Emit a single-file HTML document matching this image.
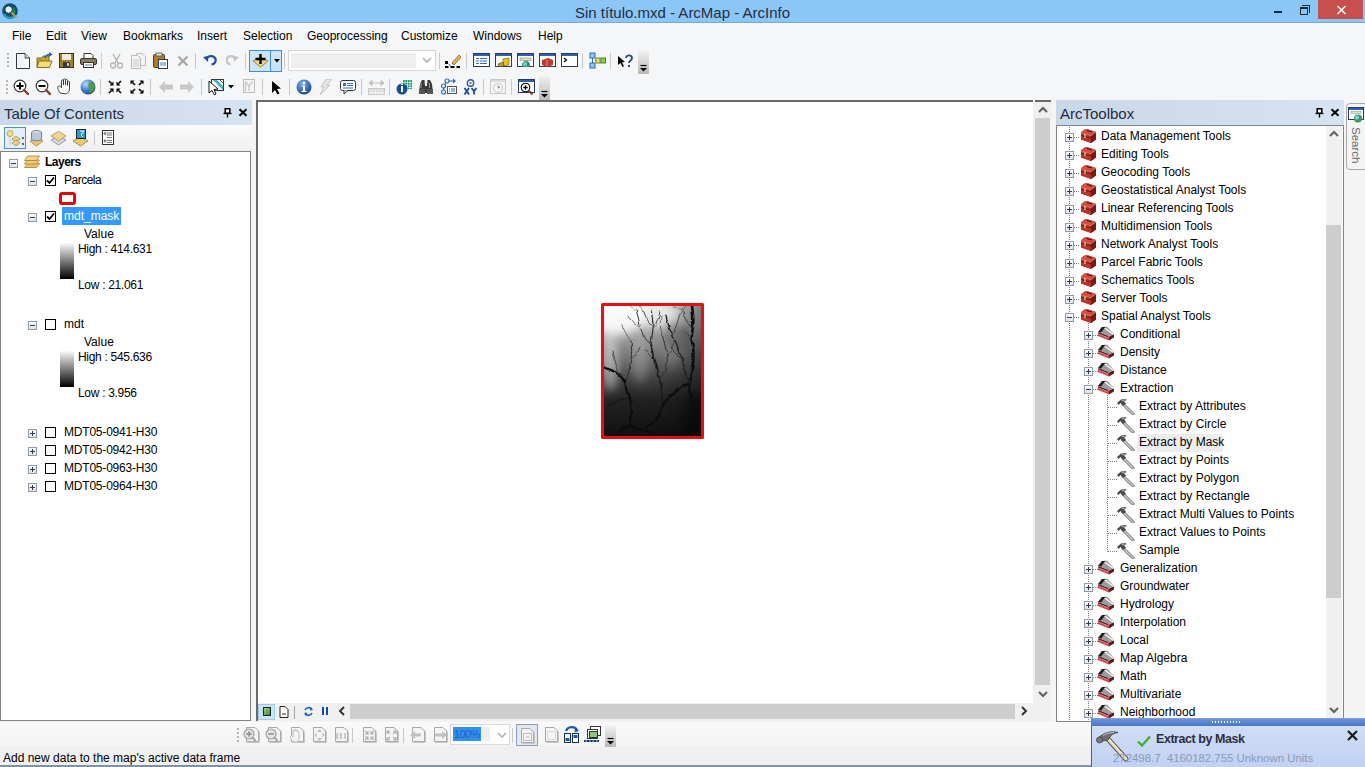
<!DOCTYPE html>
<html><head><meta charset="utf-8">
<style>
*{margin:0;padding:0;box-sizing:border-box}
html,body{width:1365px;height:767px;overflow:hidden;background:#f4f4f4;font-family:"Liberation Sans",sans-serif;font-size:12px;color:#000}
.a{position:absolute}
.t{position:absolute;white-space:nowrap;line-height:12px;height:12px}
.m{position:absolute;white-space:nowrap;line-height:12px;top:30px;color:#000}
.hdr{position:absolute;background:linear-gradient(90deg,#c9d7e8,#d6e3f1);height:25px}
.sep{position:absolute;width:1px;background:#c9c9c9}
.ic{position:absolute}
.tr{position:absolute;white-space:nowrap;line-height:12px;height:12px;color:#000}
.box{position:absolute;width:9px;height:9px;border:1px solid #919aa6;background:linear-gradient(#fdfdfd,#dfe3ea)}
.box:before{content:"";position:absolute;left:1px;top:3px;width:5px;height:1px;background:#2f3b4c}
.plus:after{content:"";position:absolute;left:3px;top:1px;width:1px;height:5px;background:#2f3b4c}
.cb{position:absolute;width:11px;height:11px;border:1px solid #000;background:#fff}
.vd{position:absolute;width:1px;background-image:linear-gradient(#808080 50%,transparent 50%);background-size:1px 2px}
.hd{position:absolute;height:1px;background-image:linear-gradient(90deg,#808080 50%,transparent 50%);background-size:2px 1px}
</style></head><body>
<svg width="0" height="0" style="position:absolute">
<defs>
<linearGradient id="gchest" x1="0" y1="0" x2="0" y2="1"><stop offset="0" stop-color="#d9463a"/><stop offset="1" stop-color="#8c1d14"/></linearGradient>
<symbol id="chest" viewBox="0 0 17 15">
<path d="M1 5 C2 3 4 1.5 6.5 1 L16 4 L16 11.5 L11 15 L1 11.5 Z" fill="#a52a25"/>
<path d="M1 5 C2 3 4 1.5 6.5 1 C9 1.5 13 3 16 4 L11 7.5 Z" fill="#cf4f45"/>
<path d="M1 5 L11 7.5 L11 15 L1 11.5 Z" fill="#b9352e"/>
<path d="M11 7.5 L16 4 L16 11.5 L11 15 Z" fill="#7c1a16"/>
<path d="M1 7.5 L11 10 L16 6.5" stroke="#6a120f" stroke-width=".9" fill="none"/>
<path d="M1.2 5.2 L11 7.7 L16 4.2" stroke="#f09080" stroke-width=".6" fill="none"/>
<path d="M5 6 V10" stroke="#e8c870" stroke-width="1.3"/>
<path d="M7 2.5 L12 4" stroke="#4a0e0a" stroke-width="1.2"/>
</symbol>
<symbol id="toolset" viewBox="0 0 17 15">
<path d="M0 6 L11 10.5 L11 14.5 L0 10 Z" fill="#c24a48"/>
<path d="M1 8 L10 12" stroke="#e89090" stroke-width=".8"/>
<path d="M11 10.5 L16 8 L16 11.5 L11 14.5 Z" fill="#5a2020"/>
<path d="M0 6 L4 1 L9 0.5 L16 8 L11 10.5 Z" fill="#9c9c9c"/>
<path d="M6 1.5 L15.5 8.5" stroke="#f6f6f6" stroke-width="1.4"/>
<path d="M0 6 L4 1 L7.5 1 L3 6.5 Z" fill="#1e1e1e"/>
<path d="M1 7 L10 10.5" stroke="#3a2020" stroke-width="1"/>
</symbol>
<symbol id="hammer" viewBox="0 0 19 17">
<path d="M7 6 L17 16" stroke="#6a6a6a" stroke-width="3" stroke-linecap="round"/>
<path d="M7 6 L17 16" stroke="#d9d9d9" stroke-width="1.2" stroke-linecap="round"/>
<path d="M1 5 L5 1.5 L9 1 L11 2 L8 3 L10 6 L7 8 L4.5 5 L2.5 7 Z" fill="#4a4a4a"/>
<path d="M5 2 L9 1.5 L7 3.5 Z" fill="#b0b0b0"/>
</symbol>
</defs>
</svg>

<!-- ================= TITLE BAR ================= -->
<div class="a" style="left:0;top:0;width:1365px;height:23px;background:#8cc6f6;border-bottom:1px solid #78a9d6"></div>
<svg class="ic" style="left:0px;top:0px" width="22" height="22" viewBox="0 0 22 22">
<circle cx="10" cy="11" r="7.8" fill="#0e4f7a"/>
<path d="M4 14 C6 18 12 19 15 16" stroke="#2a9ab8" stroke-width="2" fill="none"/>
<path d="M12 7 C15 8 16 11 15 14 L12 12 Z" fill="#1a8a4a"/>
<circle cx="8.6" cy="9.6" r="3.8" fill="#e4f2f4" stroke="#0a2a40" stroke-width="1"/>
<path d="M11.5 12.5 L16.5 17.5" stroke="#c89a40" stroke-width="2"/>
</svg>
<div class="t" style="left:575px;top:5px;font-size:15px;line-height:15px;height:15px;color:#1f2e42">Sin título.mxd - ArcMap - ArcInfo</div>
<div class="a" style="left:1274px;top:11px;width:8px;height:2px;background:#0e2a48"></div>
<div class="a" style="left:1300px;top:7px;width:8px;height:8px;border:1px solid #1e2a38;border-top-width:2px"></div>
<div class="a" style="left:1302px;top:5px;width:8px;height:8px;border-top:1px solid #1e2a38;border-right:1px solid #1e2a38"></div>
<div class="a" style="left:1318px;top:0;width:45px;height:19px;background:#c7504f"></div>
<svg class="ic" style="left:1336px;top:5px" width="11" height="10" viewBox="0 0 11 10"><path d="M1.5 1 L9.5 9 M9.5 1 L1.5 9" stroke="#fff" stroke-width="1.5"/></svg>

<!-- ================= MENU BAR ================= -->
<div class="a" style="left:0;top:23px;width:1365px;height:26px;background:#f5f6f7"></div>
<div class="m" style="left:12px">File</div>
<div class="m" style="left:46px">Edit</div>
<div class="m" style="left:81px">View</div>
<div class="m" style="left:123px">Bookmarks</div>
<div class="m" style="left:197px">Insert</div>
<div class="m" style="left:243px">Selection</div>
<div class="m" style="left:307px">Geoprocessing</div>
<div class="m" style="left:401px">Customize</div>
<div class="m" style="left:473px">Windows</div>
<div class="m" style="left:538px">Help</div>

<!-- ================= TOOLBARS ================= -->
<div class="a" style="left:0;top:49px;width:1365px;height:51px;background:#f5f6f7"></div>
<div class="a" style="left:7px;top:53px;width:2px;height:2px;background:#b4b4b4"></div><div class="a" style="left:7px;top:57px;width:2px;height:2px;background:#b4b4b4"></div><div class="a" style="left:7px;top:61px;width:2px;height:2px;background:#b4b4b4"></div><div class="a" style="left:7px;top:65px;width:2px;height:2px;background:#b4b4b4"></div>
<div class="a" style="left:6px;top:80px;width:2px;height:2px;background:#b4b4b4"></div><div class="a" style="left:6px;top:84px;width:2px;height:2px;background:#b4b4b4"></div><div class="a" style="left:6px;top:88px;width:2px;height:2px;background:#b4b4b4"></div><div class="a" style="left:6px;top:92px;width:2px;height:2px;background:#b4b4b4"></div>
<svg class="ic" style="left:16px;top:53px" width="14" height="16" viewBox="0 0 14 16"><path d="M.5 .5 H9 L13.5 5 V15.5 H.5 Z" fill="#fff" stroke="#333"/><path d="M9 .5 V5 H13.5" fill="#ddd" stroke="#333"/><rect x="1.5" y="1.5" width="7" height="13" fill="#eef3fb"/></svg>
<svg class="ic" style="left:36px;top:52px" width="17" height="17" viewBox="0 0 17 17"><path d="M1 6 H6 L7 4 H13 V15 H1 Z" fill="#c8a430" stroke="#6b5510" stroke-width=".8"/><path d="M3 9 H16 L13.5 15.5 H1 Z" fill="#f5dc70" stroke="#6b5510" stroke-width=".8"/><path d="M9 6 C10 3 12 2.5 14 2.5" stroke="#1f5fbf" stroke-width="1.6" fill="none"/><path d="M13 0 L16.5 2.5 L13 5 Z" fill="#1f5fbf"/></svg>
<svg class="ic" style="left:59px;top:53px" width="15" height="15" viewBox="0 0 15 15"><rect x=".5" y=".5" width="14" height="14" fill="#9a8430" stroke="#3e3410"/><rect x="3" y="1" width="9" height="6" fill="#f0eadc"/><rect x="4" y="9" width="7" height="5.5" fill="#3a3a3a"/><rect x="8" y="10" width="2" height="3" fill="#ccc"/></svg>
<svg class="ic" style="left:80px;top:53px" width="17" height="15" viewBox="0 0 17 15"><path d="M4 .5 H11 L13 2.5 V6 H4 Z" fill="#fff" stroke="#333"/><rect x=".5" y="5.5" width="16" height="6" rx="1.5" fill="#8a7c58" stroke="#333"/><rect x="3.5" y="9.5" width="10" height="5" fill="#fff" stroke="#333"/><path d="M5 12 H12" stroke="#4a7bc8"/></svg>
<div class="sep" style="left:101px;top:53px;height:16px"></div>
<svg class="ic" style="left:109px;top:53px" width="15" height="16" viewBox="0 0 15 16"><path d="M4 1 L9 10 M11 1 L6 10" stroke="#b4b4b4" stroke-width="1.5"/><circle cx="4" cy="12.5" r="2.5" fill="none" stroke="#b4b4b4" stroke-width="1.3"/><circle cx="11" cy="12.5" r="2.5" fill="none" stroke="#b4b4b4" stroke-width="1.3"/></svg>
<svg class="ic" style="left:131px;top:53px" width="15" height="16" viewBox="0 0 15 16"><path d="M.5 2.5 H7 L9.5 5 V15.5 H.5 Z" fill="#f4f4f4" stroke="#bbb"/><path d="M5.5 .5 H11 L14.5 4 V12.5 H9.5 V5 L7 2.5 H5.5 Z" fill="#f4f4f4" stroke="#bbb"/><path d="M2 7 H8 M2 9 H8 M2 11 H8 M2 13 H8" stroke="#ccc"/></svg>
<svg class="ic" style="left:153px;top:52px" width="15" height="17" viewBox="0 0 15 17"><rect x=".5" y="2.5" width="11" height="13" rx="1" fill="#b27a30" stroke="#5a3a10"/><rect x="3" y="1" width="6" height="3" fill="#ddd" stroke="#555" stroke-width=".8"/><rect x="5.5" y="7.5" width="9" height="9" fill="#fff" stroke="#2a3a5a"/><path d="M7 11 H13 M7 13 H13" stroke="#4a7bc8"/></svg>
<svg class="ic" style="left:177px;top:55px" width="12" height="12" viewBox="0 0 12 12"><path d="M1.5 1.5 L10.5 10.5 M10.5 1.5 L1.5 10.5" stroke="#a8a8a8" stroke-width="2.2"/></svg>
<div class="sep" style="left:195px;top:53px;height:16px"></div>
<svg class="ic" style="left:203px;top:54px" width="14" height="12" viewBox="0 0 14 12"><path d="M3 5 C5 1.5 11 1 12.5 5 C13.5 8 11 10 8.5 10.5" stroke="#1f4fa0" stroke-width="2.2" fill="none"/><path d="M0 3 L5 8 L5.5 2 Z" fill="#1f4fa0"/></svg>
<svg class="ic" style="left:226px;top:54px" width="13" height="12" viewBox="0 0 13 12"><path d="M10 5 C8 1.5 2 1 .8 5 C0 8 2 10 4.5 10.5" stroke="#c2c2c2" stroke-width="2.2" fill="none"/><path d="M13 3 L8 8 L7.5 2 Z" fill="#c2c2c2"/></svg>
<div class="sep" style="left:245px;top:53px;height:16px"></div>
<div class="a" style="left:249px;top:50px;width:33px;height:22px;background:#cce4f7;border:1px solid #3d8fd6"></div>
<div class="a" style="left:270px;top:51px;width:1px;height:20px;background:#3d8fd6"></div>
<svg class="ic" style="left:252px;top:53px" width="17" height="15" viewBox="0 0 17 15"><path d="M1 8 L8.5 4 L16 8 L8.5 14 Z" fill="#f3d684" stroke="#8a6a20" stroke-width=".8"/><path d="M8.5 1 V11 M3.5 6 H13.5" stroke="#000" stroke-width="2.4"/></svg>
<svg class="ic" style="left:274px;top:59px" width="6" height="4" viewBox="0 0 6 4"><path d="M0 0 H6 L3 3.5 Z" fill="#000"/></svg>
<div class="sep" style="left:284px;top:53px;height:16px"></div>
<div class="a" style="left:288px;top:50px;width:148px;height:21px;background:#fff;border:1px solid #d5d5d5"></div>
<div class="a" style="left:291px;top:53px;width:125px;height:15px;background:#efefef"></div>
<svg class="ic" style="left:422px;top:57px" width="10" height="7" viewBox="0 0 10 7"><path d="M1 1 L5 5 L9 1" stroke="#b0b0b0" stroke-width="1.6" fill="none"/></svg>
<div class="sep" style="left:439px;top:53px;height:16px"></div>
<svg class="ic" style="left:444px;top:53px" width="17" height="15" viewBox="0 0 17 15"><path d="M2 9 L8 14 M2 14 H15" stroke="#000" stroke-width="1" stroke-dasharray="1 1"/><rect x="1" y="8" width="3" height="3" fill="#000"/><rect x="1" y="13" width="3" height="3" fill="#000"/><rect x="7" y="13" width="3" height="3" fill="#000"/><rect x="13" y="13" width="3" height="3" fill="#000"/><path d="M8 10 L15 2 L17 4 L10 12 Z" fill="#e8b84a" stroke="#6a4a10" stroke-width=".7"/></svg>
<div class="sep" style="left:466px;top:53px;height:16px"></div>
<svg class="ic" style="left:473px;top:53px" width="17" height="14" viewBox="0 0 17 14"><rect x=".5" y=".5" width="16" height="13" fill="#fff" stroke="#2a3a5a"/><rect x="1" y="1" width="15" height="2" fill="#2f5fb0"/><path d="M3 5.5 H6 M7 5.5 H14 M3 8 H6 M7 8 H14 M3 10.5 H6 M7 10.5 H14" stroke="#2f6fd0" stroke-width="1.2"/></svg>
<svg class="ic" style="left:495px;top:53px" width="17" height="14" viewBox="0 0 17 14"><rect x=".5" y=".5" width="16" height="13" fill="#fff" stroke="#2a3a5a"/><rect x="1" y="1" width="15" height="2" fill="#2f5fb0"/><path d="M8 6 L14 5 V12 L8 13 Z" fill="#e8c020" stroke="#6a5a10" stroke-width=".6"/><path d="M3 11 L8 9 L9 13 L4 14 Z" fill="#c0a020" stroke="#444" stroke-width=".6"/></svg>
<svg class="ic" style="left:517px;top:53px" width="17" height="14" viewBox="0 0 17 14"><rect x=".5" y=".5" width="16" height="13" fill="#fff" stroke="#2a3a5a"/><rect x="1" y="1" width="15" height="2" fill="#2f5fb0"/><rect x="3" y="5" width="11" height="2.5" fill="#ddd" stroke="#888" stroke-width=".6"/><circle cx="9" cy="12" r="4" fill="#3a9a5a"/><circle cx="8" cy="11" r="2" fill="#6acaf0"/></svg>
<svg class="ic" style="left:539px;top:53px" width="17" height="14" viewBox="0 0 17 14"><rect x=".5" y=".5" width="16" height="13" fill="#fff" stroke="#2a3a5a"/><rect x="1" y="1" width="15" height="2" fill="#2f5fb0"/><path d="M3 7 L9 5 L14 7 V12 L8 14 L3 12 Z" fill="#c0392b"/><path d="M8 7 V13" stroke="#e88"/></svg>
<svg class="ic" style="left:561px;top:53px" width="17" height="14" viewBox="0 0 17 14"><rect x=".5" y=".5" width="16" height="13" fill="#fff" stroke="#2a3a5a"/><rect x="1" y="1" width="15" height="2" fill="#2f5fb0"/><path d="M3 5 L5.5 7 L3 9" stroke="#000" stroke-width="1.2" fill="none"/></svg>
<div class="sep" style="left:582px;top:53px;height:16px"></div>
<svg class="ic" style="left:589px;top:52px" width="17" height="17" viewBox="0 0 17 17"><rect x="1" y="1" width="5" height="5" fill="#8ec8f0" stroke="#2a6ab0"/><rect x="1" y="11" width="5" height="5" fill="#8ec8f0" stroke="#2a6ab0"/><rect x="7" y="6" width="4" height="5" fill="#f0e070" stroke="#8a7a20"/><rect x="12" y="6" width="4.5" height="5" fill="#8ad060" stroke="#3a8a20"/><path d="M3.5 6 V11 M6 8.5 H7" stroke="#2a6ab0"/></svg>
<div class="sep" style="left:610px;top:53px;height:16px"></div>
<svg class="ic" style="left:617px;top:53px" width="16" height="15" viewBox="0 0 16 15"><path d="M1 3 L1 12 L3.5 10 L5.5 14 L7 13.3 L5 9.3 L8 9 Z" fill="#000"/><path d="M9 5 C9 1.5 15 1.5 15 5 C15 7.5 12 7.5 12 10" stroke="#2a4a8a" stroke-width="1.8" fill="none"/><rect x="11" y="12" width="2" height="2" fill="#2a4a8a"/></svg>
<div class="a" style="left:638px;top:51px;width:11px;height:23px;background:linear-gradient(#f0f0f0,#b9b9b9);"></div><svg class="ic" style="left:640px;top:64px" width="7" height="8" viewBox="0 0 7 8"><path d="M0.5 1.5 H6.5" stroke="#000" stroke-width="1.2"/><path d="M0 4 H7 L3.5 7.5 Z" fill="#000"/></svg>
<svg class="ic" style="left:13px;top:79px" width="16" height="16" viewBox="0 0 16 16"><circle cx="7" cy="7" r="5.8" fill="#fff" stroke="#333" stroke-width="1.2"/><path d="M3.5 7 H10.5" stroke="#000" stroke-width="2"/><path d="M7 3.5 V10.5" stroke="#000" stroke-width="2"/><path d="M11 11 L15 15" stroke="#8a3a2a" stroke-width="2.4" stroke-linecap="round"/></svg>
<svg class="ic" style="left:35px;top:79px" width="16" height="16" viewBox="0 0 16 16"><circle cx="7" cy="7" r="5.8" fill="#fff" stroke="#333" stroke-width="1.2"/><path d="M3.5 7 H10.5" stroke="#000" stroke-width="2"/><path d="M11 11 L15 15" stroke="#8a3a2a" stroke-width="2.4" stroke-linecap="round"/></svg>
<svg class="ic" style="left:57px;top:78px" width="16" height="17" viewBox="0 0 16 17"><path d="M3 15 C1 12 0 9 1.5 8 C3 7.5 4 9 4.5 10 V3 C4.5 1.5 6.5 1.5 6.5 3 V7 V1.8 C6.5 .5 8.5 .5 8.5 1.8 V7 V2.5 C8.5 1 10.5 1 10.5 2.5 V7.5 V4 C10.5 3 12.5 3 12.5 4 V11 C12.5 13 11 15 9 16 Z" fill="#fff" stroke="#333" stroke-width=".9"/></svg>
<svg class="ic" style="left:80px;top:79px" width="16" height="16" viewBox="0 0 16 16"><defs><radialGradient id="glb" cx=".35" cy=".3" r=".8"><stop offset="0" stop-color="#b8e0ff"/><stop offset=".55" stop-color="#3a7ad0"/><stop offset="1" stop-color="#1a3a80"/></radialGradient></defs><circle cx="8" cy="8" r="7.5" fill="url(#glb)"/><path d="M9 4 C12 3 14.5 5 15 8 C14 11 12 13.5 9.5 14.5 C10.5 12 8.5 11 9.5 9 C8 8 8 6 9 4Z" fill="#4aa03a"/><path d="M3 10 C4 12 5 13 6.5 14 C5 14 3.5 12.5 3 10Z" fill="#4aa03a"/></svg>
<div class="sep" style="left:100px;top:79px;height:16px"></div>
<svg class="ic" style="left:108px;top:80px" width="14" height="14" viewBox="0 0 14 14"><path d="M1 1 L3.5 3.5" stroke="#000" stroke-width="1.6"/><path d="M5.5 5.5 H1.5 L5.5 1.5 Z" fill="#000"/><path d="M13 1 L10.5 3.5" stroke="#000" stroke-width="1.6"/><path d="M8.5 5.5 H12.5 L8.5 1.5 Z" fill="#000"/><path d="M1 13 L3.5 10.5" stroke="#000" stroke-width="1.6"/><path d="M5.5 8.5 H1.5 L5.5 12.5 Z" fill="#000"/><path d="M13 13 L10.5 10.5" stroke="#000" stroke-width="1.6"/><path d="M8.5 8.5 H12.5 L8.5 12.5 Z" fill="#000"/></svg>
<svg class="ic" style="left:130px;top:80px" width="14" height="14" viewBox="0 0 14 14"><path d="M5 5 L2.5 2.5" stroke="#000" stroke-width="1.6"/><path d="M.5 .5 H4.5 L.5 4.5 Z" fill="#000"/><path d="M9 5 L11.5 2.5" stroke="#000" stroke-width="1.6"/><path d="M13.5 .5 H9.5 L13.5 4.5 Z" fill="#000"/><path d="M5 9 L2.5 11.5" stroke="#000" stroke-width="1.6"/><path d="M.5 13.5 H4.5 L.5 9.5 Z" fill="#000"/><path d="M9 9 L11.5 11.5" stroke="#000" stroke-width="1.6"/><path d="M13.5 13.5 H9.5 L13.5 9.5 Z" fill="#000"/></svg>
<div class="sep" style="left:150px;top:79px;height:16px"></div>
<svg class="ic" style="left:159px;top:81px" width="14" height="12" viewBox="0 0 14 12"><path d="M0 6 L6 0 V3.5 H14 V8.5 H6 V12 Z" fill="#c8c8c8"/></svg>
<svg class="ic" style="left:180px;top:81px" width="14" height="12" viewBox="0 0 14 12"><path d="M14 6 L8 0 V3.5 H0 V8.5 H8 V12 Z" fill="#c8c8c8"/></svg>
<div class="sep" style="left:201px;top:79px;height:16px"></div>
<svg class="ic" style="left:208px;top:79px" width="16" height="16" viewBox="0 0 16 16"><rect x="3.5" y=".5" width="12" height="11" fill="#fff" stroke="#333"/><path d="M5 1 H9 L15 7 V11 Z" fill="#38b8c8"/><path d="M12 1 L15 4" stroke="#333" stroke-width=".8"/><path d="M1 2 V14 L4 11.5 L6.5 16 L8 15 L6 10.5 L10 10 Z" fill="#fff" stroke="#000" stroke-width=".9"/></svg>
<svg class="ic" style="left:228px;top:85px" width="6" height="4" viewBox="0 0 6 4"><path d="M0 0 H6 L3 3.5 Z" fill="#000"/></svg>
<svg class="ic" style="left:243px;top:79px" width="12" height="14" viewBox="0 0 12 14"><rect x=".5" y=".5" width="11" height="13" fill="#f4f4f4" stroke="#bbb"/><path d="M2.5 2.5 L6 7 L9.5 2.5 M6 7 V12 M2.5 2.5 V12" stroke="#c4c4c4" fill="none" stroke-width="1.2"/></svg>
<div class="sep" style="left:262px;top:79px;height:16px"></div>
<svg class="ic" style="left:271px;top:80px" width="11" height="15" viewBox="0 0 11 15"><path d="M1 1 V13 L4 10 L6.5 14.5 L8.5 13.5 L6 9 L10 8.5 Z" fill="#000"/></svg>
<div class="sep" style="left:289px;top:79px;height:16px"></div>
<svg class="ic" style="left:296px;top:79px" width="16" height="16" viewBox="0 0 16 16"><defs><radialGradient id="ibl" cx=".4" cy=".3" r=".8"><stop offset="0" stop-color="#7ab0f0"/><stop offset="1" stop-color="#0c3a90"/></radialGradient></defs><circle cx="8" cy="8" r="7.5" fill="url(#ibl)"/><circle cx="8" cy="4" r="1.4" fill="#fff"/><path d="M6 6.5 H9 V12 H10.5 V13 H5.5 V12 H7 V7.5 H6 Z" fill="#fff"/></svg>
<svg class="ic" style="left:318px;top:79px" width="15" height="16" viewBox="0 0 15 16"><path d="M8 0 L14 0 L9 6 L12 6 L2 16 L6 8 L3 8 Z" fill="#e4e4e4" stroke="#bbb" stroke-width=".8"/></svg>
<svg class="ic" style="left:340px;top:79px" width="16" height="16" viewBox="0 0 16 16"><rect x=".5" y="1.5" width="15" height="10" rx="2" fill="#fff" stroke="#333"/><path d="M4 11.5 L4 15 L8 11.5" fill="#fff" stroke="#333"/><rect x="3" y="4" width="3" height="3" fill="#2f6fd0"/><path d="M7 4.5 H13 M7 6.5 H13 M3 9 H13" stroke="#2f6fd0"/></svg>
<div class="sep" style="left:361px;top:79px;height:16px"></div>
<svg class="ic" style="left:368px;top:79px" width="17" height="16" viewBox="0 0 17 16"><path d="M3 4 H14 M1 4 L4 1.5 V6.5 Z M16 4 L13 1.5 V6.5 Z" stroke="#c0c0c0" fill="#c0c0c0"/><rect x=".5" y="9.5" width="16" height="6" fill="#eee" stroke="#c8c8c8"/><path d="M3 10 V13 M6 10 V13 M9 10 V13 M12 10 V13 M15 10 V13" stroke="#c8c8c8"/></svg>
<div class="sep" style="left:389px;top:79px;height:16px"></div>
<svg class="ic" style="left:396px;top:79px" width="17" height="16" viewBox="0 0 17 16"><path d="M7 1 H16 V10 H7 Z" fill="#1a9a6a"/><path d="M9 1 V10 M11.5 1 V10 M14 1 V10 M7 3.5 H16 M7 6 H16 M7 8.5 H16" stroke="#fff" stroke-width=".6"/><circle cx="6" cy="10" r="5.5" fill="#1a4a9a"/><path d="M5 7 H7 V13 H5 Z M5 5 H7 V6 H5Z" fill="#fff"/></svg>
<svg class="ic" style="left:418px;top:79px" width="16" height="16" viewBox="0 0 16 16"><path d="M1 14 L2 5 L4 1 H6.5 L7 7 H9 L9.5 1 H12 L14 5 L15 14 Z" fill="#3a3a3a"/><rect x="1" y="10" width="6" height="5" fill="#555"/><rect x="9" y="10" width="6" height="5" fill="#555"/><path d="M3 4 V9 M11.5 4 V9" stroke="#999"/></svg>
<svg class="ic" style="left:441px;top:78px" width="16" height="17" viewBox="0 0 16 17"><circle cx="2.5" cy="8" r="2" fill="none" stroke="#2a6ab0" stroke-width="1.2"/><circle cx="2.5" cy="14" r="2" fill="none" stroke="#2a6ab0" stroke-width="1.2"/><circle cx="6" cy="3" r="2" fill="none" stroke="#2a6ab0" stroke-width="1.2"/><path d="M2.5 10 V12 M4 6.5 L5 5 M8 3 H12" stroke="#2a6ab0" stroke-width="1.2"/><path d="M12 .5 L15 3 L12 5.5Z" fill="#2a6ab0"/><rect x="6.5" y="8.5" width="9" height="7" fill="#fff" stroke="#555"/><path d="M8 11 H9 M10 11 H14 M8 13 H9 M10 13 H14" stroke="#2a6ab0"/></svg>
<svg class="ic" style="left:464px;top:79px" width="13" height="16" viewBox="0 0 13 16"><circle cx="6.5" cy="4" r="3.2" fill="none" stroke="#2a5aa8" stroke-width="1.4"/><circle cx="6.5" cy="4" r="1" fill="#2a5aa8"/><path d="M.5 9 L5 15.5 M5 9 L.5 15.5 M7.5 9 L10 12 L12.5 9 M10 12 V15.5" stroke="#1a4a9a" stroke-width="1.8" fill="none"/></svg>
<div class="sep" style="left:483px;top:79px;height:16px"></div>
<svg class="ic" style="left:490px;top:79px" width="16" height="16" viewBox="0 0 16 16"><rect x=".5" y=".5" width="15" height="14" fill="#f4f4f4" stroke="#c8c8c8"/><rect x="1" y="1" width="14" height="2" fill="#ddd"/><circle cx="8" cy="9" r="4.5" fill="none" stroke="#c8c8c8"/><path d="M8 6.5 V9 H10" stroke="#c8c8c8"/></svg>
<div class="sep" style="left:511px;top:79px;height:16px"></div>
<svg class="ic" style="left:518px;top:79px" width="17" height="17" viewBox="0 0 17 17"><rect x=".5" y=".5" width="16" height="13" fill="#fff" stroke="#2a3a5a"/><rect x="1" y="1" width="15" height="2" fill="#2f5fb0"/><circle cx="7.5" cy="8.5" r="4.3" fill="#fff" stroke="#000" stroke-width="1.1"/><path d="M5.3 8.5 H9.7 M7.5 6.3 V10.7" stroke="#000" stroke-width="1.3"/><path d="M10.5 11.5 L14.5 15.5" stroke="#8a3a2a" stroke-width="2.2"/></svg>
<div class="a" style="left:539px;top:76px;width:11px;height:24px;background:linear-gradient(#f0f0f0,#b9b9b9);"></div><svg class="ic" style="left:541px;top:90px" width="7" height="8" viewBox="0 0 7 8"><path d="M0.5 1.5 H6.5" stroke="#000" stroke-width="1.2"/><path d="M0 4 H7 L3.5 7.5 Z" fill="#000"/></svg>

<!-- ================= TOC ================= -->
<div class="hdr" style="left:0;top:100px;width:252px"></div>
<div class="t" style="left:4px;top:106px;font-size:15px;line-height:15px;height:15px;color:#1f2e42">Table Of Contents</div>
<svg class="ic" style="left:223px;top:107px" width="9" height="11" viewBox="0 0 9 11"><path d="M2.2 1.8 H6.8 V6.2 H2.2 Z" stroke="#000" stroke-width="1.5" fill="#fff"/><path d="M0.5 6.5 H8.5" stroke="#000" stroke-width="1.3"/><path d="M4.5 7 V10.5" stroke="#000" stroke-width="1.3"/></svg>
<svg class="ic" style="left:238px;top:108px" width="10" height="9" viewBox="0 0 10 9"><path d="M1.5 1.2 L8.5 7.8 M8.5 1.2 L1.5 7.8" stroke="#000" stroke-width="2"/></svg>
<div class="a" style="left:0;top:125px;width:252px;height:26px;background:linear-gradient(#fbfbfb,#efefef)"></div>
<div class="a" style="left:4px;top:127px;width:22px;height:22px;border:1px solid #4a90d8;background:#e2eefa"></div>
<svg class="ic" style="left:6px;top:130px" width="19" height="17" viewBox="0 0 19 17"><circle cx="4" cy="3.5" r="3" fill="#f0e080" stroke="#b0a040" stroke-width=".8"/><path d="M6 9 L10 6 L14 9 L10 12 Z" fill="#f0d090" stroke="#b08a40" stroke-width=".8"/><path d="M6 13 L10 10 L14 13 L10 16 Z" fill="#f0d090" stroke="#b08a40" stroke-width=".8"/><path d="M4 6 V14 H6" stroke="#999" stroke-width=".8" fill="none" stroke-dasharray="1 1"/><path d="M16 8 H18 M16 14 H18" stroke="#2a3a5a" stroke-width="1.4"/></svg>
<svg class="ic" style="left:29px;top:130px" width="15" height="17" viewBox="0 0 15 17"><path d="M1 11 L7.5 7 L14 11 L7.5 16 Z" fill="#f0c870" stroke="#a07a30" stroke-width=".8"/><ellipse cx="7.5" cy="2.5" rx="5" ry="2" fill="#dde6f0" stroke="#667" stroke-width=".8"/><path d="M2.5 2.5 V9 C2.5 11.5 12.5 11.5 12.5 9 V2.5" fill="#b8c8dc" stroke="#667" stroke-width=".8"/></svg>
<svg class="ic" style="left:50px;top:130px" width="17" height="17" viewBox="0 0 17 17"><path d="M1 10 L8.5 6 L16 10 L8.5 15 Z" fill="#d8d8e8" stroke="#8888a0" stroke-width=".8"/><path d="M1 6 L8.5 1.5 L16 6 L8.5 11 Z" fill="#f0d490" stroke="#b08a40" stroke-width=".8"/></svg>
<svg class="ic" style="left:72px;top:129px" width="17" height="18" viewBox="0 0 17 18"><path d="M1 12 L8.5 8 L16 12 L8.5 17 Z" fill="#f0c870" stroke="#a07a30" stroke-width=".8"/><rect x="4.5" y=".5" width="9" height="9" fill="#2a9ad0" stroke="#223"/><path d="M8 2 L12 2 L9 6 L11 8" stroke="#fff" fill="none"/></svg>
<div class="sep" style="left:94px;top:131px;height:14px"></div>
<svg class="ic" style="left:102px;top:130px" width="12" height="15" viewBox="0 0 12 15"><rect x=".5" y=".5" width="11" height="14" fill="#fff" stroke="#333"/><circle cx="3" cy="3.5" r="1" fill="none" stroke="#333" stroke-width=".8"/><circle cx="3" cy="11" r="1" fill="none" stroke="#333" stroke-width=".8"/><path d="M5 3 H10 M5 5 H10 M5 7.5 H10 M5 10.5 H10 M5 12.5 H10" stroke="#555" stroke-width=".8"/></svg>
<div class="a" style="left:0;top:151px;width:251px;height:570px;background:#fff;border:1px solid #838383"></div>
<div class="box" style="left:9px;top:159px"></div>
<svg class="ic" style="left:24px;top:155px" width="16" height="13" viewBox="0 0 16 13">
<path d="M0.5 12.5 L12.5 12.5 L15.5 8.5 L3.5 8.5 Z" fill="#e9c470" stroke="#a88030" stroke-width=".8"/>
<path d="M0.5 9 L12.5 9 L15.5 5 L3.5 5 Z" fill="#efcc78" stroke="#a88030" stroke-width=".8"/>
<path d="M0.5 5.5 L12.5 5.5 L15.5 1 L3.5 1 Z" fill="#f4d68a" stroke="#a88030" stroke-width=".8"/>
</svg>
<div class="tr" style="left:45px;top:156px;letter-spacing:-0.5px"><b>Layers</b></div>
<div class="box" style="left:28px;top:177px"></div>
<div class="cb" style="left:45px;top:175px"></div>
<svg class="ic" style="left:46px;top:176px" width="9" height="9" viewBox="0 0 9 9"><path d="M1 4.5 L3.5 7 L8 1.5" stroke="#000" stroke-width="1.8" fill="none"/></svg>
<div class="tr" style="left:64px;top:174px;letter-spacing:-0.5px">Parcela</div>
<div class="a" style="left:59px;top:192px;width:17px;height:13px;border:3px solid #e00a0a;border-radius:3px"></div>
<div class="box" style="left:28px;top:213px"></div>
<div class="cb" style="left:45px;top:211px"></div>
<svg class="ic" style="left:46px;top:212px" width="9" height="9" viewBox="0 0 9 9"><path d="M1 4.5 L3.5 7 L8 1.5" stroke="#000" stroke-width="1.8" fill="none"/></svg>
<div class="a" style="left:62px;top:207px;width:59px;height:18px;background:#3399ff"></div>
<div class="tr" style="left:64px;top:210px;color:#fff">mdt_mask</div>
<div class="tr" style="left:84px;top:228px;">Value</div>
<div class="a" style="left:60px;top:243px;width:14px;height:36px;background:linear-gradient(#fafafa,#000)"></div>
<div class="tr" style="left:78px;top:243px;letter-spacing:-0.3px">High : 414.631</div>
<div class="tr" style="left:78px;top:279px;letter-spacing:-0.3px">Low : 21.061</div>
<div class="box" style="left:28px;top:321px"></div>
<div class="cb" style="left:45px;top:319px"></div>
<div class="tr" style="left:64px;top:318px;letter-spacing:0">mdt</div>
<div class="tr" style="left:84px;top:336px;">Value</div>
<div class="a" style="left:60px;top:351px;width:14px;height:36px;background:linear-gradient(#fafafa,#000)"></div>
<div class="tr" style="left:78px;top:351px;letter-spacing:-0.3px">High : 545.636</div>
<div class="tr" style="left:78px;top:387px;letter-spacing:-0.3px">Low : 3.956</div>
<div class="box plus" style="left:28px;top:429px"></div>
<div class="cb" style="left:45px;top:427px"></div>
<div class="tr" style="left:64px;top:426px;letter-spacing:-0.2px">MDT05-0941-H30</div>
<div class="box plus" style="left:28px;top:447px"></div>
<div class="cb" style="left:45px;top:445px"></div>
<div class="tr" style="left:64px;top:444px;letter-spacing:-0.2px">MDT05-0942-H30</div>
<div class="box plus" style="left:28px;top:465px"></div>
<div class="cb" style="left:45px;top:463px"></div>
<div class="tr" style="left:64px;top:462px;letter-spacing:-0.2px">MDT05-0963-H30</div>
<div class="box plus" style="left:28px;top:483px"></div>
<div class="cb" style="left:45px;top:481px"></div>
<div class="tr" style="left:64px;top:480px;letter-spacing:-0.2px">MDT05-0964-H30</div>

<!-- ================= MAP ================= -->
<div class="a" style="left:256px;top:100px;width:2px;height:621px;background:#6a6a6a"></div>
<div class="a" style="left:256px;top:100px;width:777px;height:2px;background:#6a6a6a"></div><div class="a" style="left:1035px;top:100px;width:16px;height:2px;background:#6a6a6a"></div>
<div class="a" style="left:258px;top:102px;width:775px;height:601px;background:#fff"></div>
<div class="a" style="left:1033px;top:102px;width:18px;height:619px;background:#f0f0f0"></div>
<div class="a" style="left:1035px;top:118px;width:15px;height:567px;background:#cdcdcd"></div>
<svg class="ic" style="left:601px;top:303px" width="103" height="136" viewBox="-3 -3 103 136">
<defs>
<linearGradient id="dv" x1="0" y1="0" x2="0" y2="1">
<stop offset="0" stop-color="#e8e8e8"/><stop offset=".15" stop-color="#c4c4c4"/><stop offset=".35" stop-color="#808080"/>
<stop offset=".55" stop-color="#484848"/><stop offset=".72" stop-color="#242424"/><stop offset="1" stop-color="#101010"/></linearGradient>
<linearGradient id="dh" x1="0" y1="0" x2="1" y2="0">
<stop offset="0" stop-color="#000" stop-opacity="0"/><stop offset=".6" stop-color="#000" stop-opacity=".1"/><stop offset="1" stop-color="#000" stop-opacity=".45"/></linearGradient>
<radialGradient id="wb" cx=".5" cy=".5" r=".5"><stop offset="0" stop-color="#fff" stop-opacity="1"/><stop offset=".55" stop-color="#fff" stop-opacity=".75"/><stop offset="1" stop-color="#fff" stop-opacity="0"/></radialGradient>
<filter id="wob" x="-10%" y="-10%" width="120%" height="120%"><feTurbulence type="fractalNoise" baseFrequency="0.12" numOctaves="2" seed="7" result="t"/><feDisplacementMap in="SourceGraphic" in2="t" scale="4" xChannelSelector="R" yChannelSelector="G" result="d"/><feGaussianBlur in="d" stdDeviation="0.6"/></filter>
<filter id="nz" x="0" y="0" width="100%" height="100%"><feTurbulence type="fractalNoise" baseFrequency="0.12" numOctaves="2" seed="3"/><feColorMatrix type="matrix" values="0 0 0 0 1  0 0 0 0 1  0 0 0 0 1  0 0 0 -2 1.1"/></filter>
<filter id="sb" x="-50%" y="-50%" width="200%" height="200%"><feGaussianBlur stdDeviation="5"/></filter>
</defs>
<rect x="0" y="0" width="97" height="130" fill="url(#dv)"/>
<rect x="0" y="0" width="97" height="130" fill="url(#dh)"/>
<g filter="url(#sb)">
<ellipse cx="14" cy="10" rx="26" ry="18" fill="#fff" opacity=".85"/>
<ellipse cx="6" cy="55" rx="8" ry="30" fill="#fff" opacity=".45"/>
<ellipse cx="50" cy="8" rx="26" ry="12" fill="#fff" opacity=".6"/>
<ellipse cx="36" cy="55" rx="9" ry="22" fill="#fff" opacity=".22"/>
<ellipse cx="68" cy="45" rx="8" ry="18" fill="#fff" opacity=".15"/>
<ellipse cx="90" cy="110" rx="10" ry="25" fill="#000" opacity=".3"/>
<ellipse cx="72" cy="30" rx="14" ry="16" fill="#000" opacity=".22"/>
</g>

<g filter="url(#wob)" stroke="#0c0c0c" fill="none" stroke-linecap="round" stroke-linejoin="round">
<path d="M88 0 C89 8 90 14 89 21 C88 28 87 32 88 36 C90 44 90 50 89 56 C88 64 86 70 85 77 C86 84 87 90 88 96 C90 104 93 110 94 116 C95 122 96 126 96 130" stroke-width="2.6"/>
<path d="M85 77 C80 80 76 82 72 85 C68 88 65 91 62 95 C59 99 57 102 56 106 C54 111 51 115 48 118 C44 122 41 124 38 124 C34 124 30 121 26 120 C22 120 18 123 14 127 L10 130" stroke-width="2.4"/>
<path d="M0 61 C5 63 10 65 14 68 C18 71 20 74 21 78 C23 84 25 88 26 92 C27 98 28 104 28 108 C28 112 27 116 26 120" stroke-width="2.2"/>
<path d="M56 106 C57 100 58 96 58 91 C58 84 57 78 56 73 C54 66 52 60 50 54 C49 48 48 44 47 40" stroke-width="1.6" stroke="#1a1a1a"/>
<path d="M47 40 C48 32 49 26 49 20 C49 14 48 9 47 4" stroke-width="1.2" stroke="#303030"/>
<path d="M49 20 C44 16 42 12 40 6" stroke-width=".9" stroke="#404040"/>
<path d="M49 22 C53 18 55 12 56 5" stroke-width=".9" stroke="#404040"/>
<path d="M47 40 C42 34 38 28 36 20 C35 14 34 10 32 4" stroke-width="1" stroke="#383838"/>
<path d="M36 22 C30 20 27 16 24 10" stroke-width=".8" stroke="#505050"/>
<path d="M85 77 C82 68 80 60 78 52 C75 44 72 36 68 28 C65 22 63 16 62 8" stroke-width="1.4" stroke="#222"/>
<path d="M68 28 C72 22 74 16 75 10" stroke-width=".9" stroke="#404040"/>
<path d="M78 52 C73 50 70 46 67 42" stroke-width=".9" stroke="#333"/>
<path d="M89 21 C84 18 81 14 79 6" stroke-width="1" stroke="#333"/>
<path d="M21 78 C24 70 26 62 27 54 C28 48 28 42 27 36" stroke-width="1.1" stroke="#333"/>
<path d="M14 68 C12 60 10 54 8 46" stroke-width=".9" stroke="#444"/>
<path d="M27 36 C24 30 20 26 18 18" stroke-width=".8" stroke="#555"/>
<path d="M62 95 C66 90 70 86 74 82" stroke-width=".9" stroke="#1a1a1a"/>
<path d="M26 92 C20 92 12 96 4 100" stroke-width="1" stroke="#141414"/>
<path d="M38 124 C42 126 46 127 52 128" stroke-width="1.2" stroke="#0a0a0a"/>
<path d="M56 73 C62 66 64 58 63 50 C62 42 60 36 58 28" stroke-width=".9" stroke="#2a2a2a"/>
<path d="M63 50 C67 46 70 40 70 34" stroke-width=".7" stroke="#3a3a3a"/>
<path d="M58 28 C56 22 56 16 57 10" stroke-width=".7" stroke="#444"/>
<path d="M40 6 C37 3 36 1 35 0" stroke-width=".7" stroke="#555"/>
<path d="M32 4 C30 2 28 1 27 0" stroke-width=".6" stroke="#666"/>
<path d="M75 10 C77 5 80 2 82 0" stroke-width=".7" stroke="#444"/>
<path d="M79 6 C76 3 73 2 70 1" stroke-width=".6" stroke="#555"/>
<path d="M89 36 C86 34 83 30 82 26" stroke-width=".8" stroke="#333"/>
<path d="M26 92 C30 98 34 100 38 104" stroke-width=".7" stroke="#1a1a1a"/>
<path d="M50 54 C46 50 44 46 41 44" stroke-width=".7" stroke="#333"/>
<path d="M27 54 C32 50 34 46 36 40" stroke-width=".7" stroke="#3a3a3a"/>
</g>
<path d="M-1.5 -1.5 H98.5 V131.5 H-1.5 Z" fill="none" stroke="#e8100f" stroke-width="3" stroke-linejoin="round"/>
</svg>
<svg class="ic" style="left:1038px;top:106px" width="10" height="8"><path d="M1 6 L5 2 L9 6" stroke="#606060" stroke-width="2" fill="none"/></svg>
<svg class="ic" style="left:1038px;top:690px" width="10" height="8"><path d="M1 2 L5 6 L9 2" stroke="#606060" stroke-width="2" fill="none"/></svg>
<div class="a" style="left:258px;top:703px;width:793px;height:18px;background:#f0f0f0"></div>
<div class="a" style="left:258px;top:704px;width:17px;height:16px;background:#cce4f7;border:1px solid #99c9ef"></div>
<div class="a" style="left:263px;top:707px;width:8px;height:9px;border:1px solid #222;background:linear-gradient(135deg,#9ad080,#3a8a3a)"></div>
<svg class="ic" style="left:279px;top:706px" width="10" height="12"><path d="M1 .5 H6 L9 3.5 V11.5 H1 Z" fill="#fff" stroke="#222"/><path d="M3 8 H7" stroke="#222"/></svg>
<div class="sep" style="left:294px;top:706px;height:13px;background:#a0a0a0"></div>
<svg class="ic" style="left:303px;top:706px" width="11" height="11" viewBox="0 0 11 11"><path d="M2 4 A4 4 0 0 1 9 3.5 M9 7 A4 4 0 0 1 2 7.5" stroke="#1a5fb4" stroke-width="1.6" fill="none"/><path d="M7.5 1.5 L10 4 L7 4.5Z M3.5 9.5 L1 7 L4 6.5Z" fill="#1a5fb4"/></svg>
<div class="a" style="left:322px;top:707px;width:2px;height:8px;background:#0a4ea0"></div><div class="a" style="left:326px;top:707px;width:2px;height:8px;background:#0a4ea0"></div>
<svg class="ic" style="left:338px;top:706px" width="8" height="10"><path d="M6 1 L2 5 L6 9" stroke="#333" stroke-width="2" fill="none"/></svg>
<div class="a" style="left:350px;top:704px;width:665px;height:15px;background:#cdcdcd"></div>
<svg class="ic" style="left:1020px;top:706px" width="8" height="10"><path d="M2 1 L6 5 L2 9" stroke="#333" stroke-width="2" fill="none"/></svg>

<!-- ================= TOOLBOX ================= -->
<div class="hdr" style="left:1056px;top:100px;width:288px"></div>
<div class="t" style="left:1060px;top:106px;font-size:15px;line-height:15px;height:15px;color:#1f2e42">ArcToolbox</div>
<svg class="ic" style="left:1315px;top:107px" width="9" height="11" viewBox="0 0 9 11"><path d="M2.2 1.8 H6.8 V6.2 H2.2 Z" stroke="#000" stroke-width="1.5" fill="#fff"/><path d="M0.5 6.5 H8.5" stroke="#000" stroke-width="1.3"/><path d="M4.5 7 V10.5" stroke="#000" stroke-width="1.3"/></svg>
<svg class="ic" style="left:1330px;top:108px" width="10" height="9" viewBox="0 0 10 9"><path d="M1.5 1.2 L8.5 7.8 M8.5 1.2 L1.5 7.8" stroke="#000" stroke-width="2"/></svg>
<div class="a" style="left:1056px;top:125px;width:288px;height:597px;background:#fff;border:1px solid #838383"></div>
<div class="a" style="left:1326px;top:126px;width:16px;height:595px;background:#f0f0f0"></div>
<div class="a" style="left:1326px;top:225px;width:15px;height:373px;background:#cdcdcd"></div>
<div class="vd" style="left:1069px;top:127px;height:594px"></div>
<div class="vd" style="left:1088px;top:323px;height:398px"></div>
<div class="vd" style="left:1107px;top:395px;height:157px"></div>
<div class="hd" style="left:1074px;top:137px;width:6px"></div>
<div class="box plus" style="left:1065px;top:133px"></div>
<svg class="ic" style="left:1080px;top:128px" width="17" height="15"><use href="#chest"/></svg>
<div class="tr" style="left:1101px;top:130px;">Data Management Tools</div>
<div class="hd" style="left:1074px;top:155px;width:6px"></div>
<div class="box plus" style="left:1065px;top:151px"></div>
<svg class="ic" style="left:1080px;top:146px" width="17" height="15"><use href="#chest"/></svg>
<div class="tr" style="left:1101px;top:148px;">Editing Tools</div>
<div class="hd" style="left:1074px;top:173px;width:6px"></div>
<div class="box plus" style="left:1065px;top:169px"></div>
<svg class="ic" style="left:1080px;top:164px" width="17" height="15"><use href="#chest"/></svg>
<div class="tr" style="left:1101px;top:166px;">Geocoding Tools</div>
<div class="hd" style="left:1074px;top:191px;width:6px"></div>
<div class="box plus" style="left:1065px;top:187px"></div>
<svg class="ic" style="left:1080px;top:182px" width="17" height="15"><use href="#chest"/></svg>
<div class="tr" style="left:1101px;top:184px;">Geostatistical Analyst Tools</div>
<div class="hd" style="left:1074px;top:209px;width:6px"></div>
<div class="box plus" style="left:1065px;top:205px"></div>
<svg class="ic" style="left:1080px;top:200px" width="17" height="15"><use href="#chest"/></svg>
<div class="tr" style="left:1101px;top:202px;">Linear Referencing Tools</div>
<div class="hd" style="left:1074px;top:227px;width:6px"></div>
<div class="box plus" style="left:1065px;top:223px"></div>
<svg class="ic" style="left:1080px;top:218px" width="17" height="15"><use href="#chest"/></svg>
<div class="tr" style="left:1101px;top:220px;">Multidimension Tools</div>
<div class="hd" style="left:1074px;top:245px;width:6px"></div>
<div class="box plus" style="left:1065px;top:241px"></div>
<svg class="ic" style="left:1080px;top:236px" width="17" height="15"><use href="#chest"/></svg>
<div class="tr" style="left:1101px;top:238px;">Network Analyst Tools</div>
<div class="hd" style="left:1074px;top:263px;width:6px"></div>
<div class="box plus" style="left:1065px;top:259px"></div>
<svg class="ic" style="left:1080px;top:254px" width="17" height="15"><use href="#chest"/></svg>
<div class="tr" style="left:1101px;top:256px;">Parcel Fabric Tools</div>
<div class="hd" style="left:1074px;top:281px;width:6px"></div>
<div class="box plus" style="left:1065px;top:277px"></div>
<svg class="ic" style="left:1080px;top:272px" width="17" height="15"><use href="#chest"/></svg>
<div class="tr" style="left:1101px;top:274px;">Schematics Tools</div>
<div class="hd" style="left:1074px;top:299px;width:6px"></div>
<div class="box plus" style="left:1065px;top:295px"></div>
<svg class="ic" style="left:1080px;top:290px" width="17" height="15"><use href="#chest"/></svg>
<div class="tr" style="left:1101px;top:292px;">Server Tools</div>
<div class="hd" style="left:1074px;top:317px;width:6px"></div>
<div class="box" style="left:1065px;top:313px"></div>
<svg class="ic" style="left:1080px;top:308px" width="17" height="15"><use href="#chest"/></svg>
<div class="tr" style="left:1101px;top:310px;">Spatial Analyst Tools</div>
<div class="hd" style="left:1093px;top:335px;width:6px"></div>
<div class="box plus" style="left:1084px;top:331px"></div>
<svg class="ic" style="left:1098px;top:326px" width="17" height="15"><use href="#toolset"/></svg>
<div class="tr" style="left:1120px;top:328px;">Conditional</div>
<div class="hd" style="left:1093px;top:353px;width:6px"></div>
<div class="box plus" style="left:1084px;top:349px"></div>
<svg class="ic" style="left:1098px;top:344px" width="17" height="15"><use href="#toolset"/></svg>
<div class="tr" style="left:1120px;top:346px;">Density</div>
<div class="hd" style="left:1093px;top:371px;width:6px"></div>
<div class="box plus" style="left:1084px;top:367px"></div>
<svg class="ic" style="left:1098px;top:362px" width="17" height="15"><use href="#toolset"/></svg>
<div class="tr" style="left:1120px;top:364px;">Distance</div>
<div class="hd" style="left:1093px;top:389px;width:6px"></div>
<div class="box" style="left:1084px;top:385px"></div>
<svg class="ic" style="left:1098px;top:380px" width="17" height="15"><use href="#toolset"/></svg>
<div class="tr" style="left:1120px;top:382px;">Extraction</div>
<div class="hd" style="left:1108px;top:407px;width:9px"></div>
<svg class="ic" style="left:1116px;top:398px" width="19" height="17"><use href="#hammer"/></svg>
<div class="tr" style="left:1139px;top:400px;">Extract by Attributes</div>
<div class="hd" style="left:1108px;top:425px;width:9px"></div>
<svg class="ic" style="left:1116px;top:416px" width="19" height="17"><use href="#hammer"/></svg>
<div class="tr" style="left:1139px;top:418px;">Extract by Circle</div>
<div class="hd" style="left:1108px;top:443px;width:9px"></div>
<svg class="ic" style="left:1116px;top:434px" width="19" height="17"><use href="#hammer"/></svg>
<div class="a" style="left:1137px;top:434px;width:86px;height:18px;background:#ededed"></div>
<div class="tr" style="left:1139px;top:436px;">Extract by Mask</div>
<div class="hd" style="left:1108px;top:461px;width:9px"></div>
<svg class="ic" style="left:1116px;top:452px" width="19" height="17"><use href="#hammer"/></svg>
<div class="tr" style="left:1139px;top:454px;">Extract by Points</div>
<div class="hd" style="left:1108px;top:479px;width:9px"></div>
<svg class="ic" style="left:1116px;top:470px" width="19" height="17"><use href="#hammer"/></svg>
<div class="tr" style="left:1139px;top:472px;">Extract by Polygon</div>
<div class="hd" style="left:1108px;top:497px;width:9px"></div>
<svg class="ic" style="left:1116px;top:488px" width="19" height="17"><use href="#hammer"/></svg>
<div class="tr" style="left:1139px;top:490px;">Extract by Rectangle</div>
<div class="hd" style="left:1108px;top:515px;width:9px"></div>
<svg class="ic" style="left:1116px;top:506px" width="19" height="17"><use href="#hammer"/></svg>
<div class="tr" style="left:1139px;top:508px;">Extract Multi Values to Points</div>
<div class="hd" style="left:1108px;top:533px;width:9px"></div>
<svg class="ic" style="left:1116px;top:524px" width="19" height="17"><use href="#hammer"/></svg>
<div class="tr" style="left:1139px;top:526px;">Extract Values to Points</div>
<div class="hd" style="left:1108px;top:551px;width:9px"></div>
<svg class="ic" style="left:1116px;top:542px" width="19" height="17"><use href="#hammer"/></svg>
<div class="tr" style="left:1139px;top:544px;">Sample</div>
<div class="hd" style="left:1093px;top:569px;width:6px"></div>
<div class="box plus" style="left:1084px;top:565px"></div>
<svg class="ic" style="left:1098px;top:560px" width="17" height="15"><use href="#toolset"/></svg>
<div class="tr" style="left:1120px;top:562px;">Generalization</div>
<div class="hd" style="left:1093px;top:587px;width:6px"></div>
<div class="box plus" style="left:1084px;top:583px"></div>
<svg class="ic" style="left:1098px;top:578px" width="17" height="15"><use href="#toolset"/></svg>
<div class="tr" style="left:1120px;top:580px;">Groundwater</div>
<div class="hd" style="left:1093px;top:605px;width:6px"></div>
<div class="box plus" style="left:1084px;top:601px"></div>
<svg class="ic" style="left:1098px;top:596px" width="17" height="15"><use href="#toolset"/></svg>
<div class="tr" style="left:1120px;top:598px;">Hydrology</div>
<div class="hd" style="left:1093px;top:623px;width:6px"></div>
<div class="box plus" style="left:1084px;top:619px"></div>
<svg class="ic" style="left:1098px;top:614px" width="17" height="15"><use href="#toolset"/></svg>
<div class="tr" style="left:1120px;top:616px;">Interpolation</div>
<div class="hd" style="left:1093px;top:641px;width:6px"></div>
<div class="box plus" style="left:1084px;top:637px"></div>
<svg class="ic" style="left:1098px;top:632px" width="17" height="15"><use href="#toolset"/></svg>
<div class="tr" style="left:1120px;top:634px;">Local</div>
<div class="hd" style="left:1093px;top:659px;width:6px"></div>
<div class="box plus" style="left:1084px;top:655px"></div>
<svg class="ic" style="left:1098px;top:650px" width="17" height="15"><use href="#toolset"/></svg>
<div class="tr" style="left:1120px;top:652px;">Map Algebra</div>
<div class="hd" style="left:1093px;top:677px;width:6px"></div>
<div class="box plus" style="left:1084px;top:673px"></div>
<svg class="ic" style="left:1098px;top:668px" width="17" height="15"><use href="#toolset"/></svg>
<div class="tr" style="left:1120px;top:670px;">Math</div>
<div class="hd" style="left:1093px;top:695px;width:6px"></div>
<div class="box plus" style="left:1084px;top:691px"></div>
<svg class="ic" style="left:1098px;top:686px" width="17" height="15"><use href="#toolset"/></svg>
<div class="tr" style="left:1120px;top:688px;">Multivariate</div>
<div class="hd" style="left:1093px;top:713px;width:6px"></div>
<div class="box plus" style="left:1084px;top:709px"></div>
<svg class="ic" style="left:1098px;top:704px" width="17" height="15"><use href="#toolset"/></svg>
<div class="tr" style="left:1120px;top:706px;">Neighborhood</div>
<svg class="ic" style="left:1329px;top:130px" width="10" height="8"><path d="M1 6 L5 2 L9 6" stroke="#606060" stroke-width="2" fill="none"/></svg>
<svg class="ic" style="left:1329px;top:706px" width="10" height="8"><path d="M1 2 L5 6 L9 2" stroke="#606060" stroke-width="2" fill="none"/></svg>

<!-- ================= BOTTOM ================= -->
<div class="a" style="left:0;top:722px;width:1365px;height:24px;background:linear-gradient(#f9f9f9,#f4f4f4)"></div><div class="a" style="left:0;top:746px;width:1365px;height:19px;background:#f0f0f0"></div>
<div class="a" style="left:237px;top:728px;width:2px;height:2px;background:#b4b4b4"></div><div class="a" style="left:237px;top:732px;width:2px;height:2px;background:#b4b4b4"></div><div class="a" style="left:237px;top:736px;width:2px;height:2px;background:#b4b4b4"></div><div class="a" style="left:237px;top:740px;width:2px;height:2px;background:#b4b4b4"></div>
<svg class="ic" style="left:243px;top:727px" width="17" height="16" viewBox="0 0 17 16"><path d="M4.5 1.5 H13 L16.5 5 V15.5 H4.5 Z" fill="#e6e6e6" stroke="#c8c8c8"/><path d="M3.5 .5 H12 L15.5 4 V14.5 H3.5 Z" fill="#f4f4f4" stroke="#a9a9a9"/><circle cx="6" cy="7" r="5" fill="#e4e4e4" stroke="#a0a0a0" stroke-width="1.2"/><path d="M3.2 7 H8.8 M6 4.2 V9.8" stroke="#999" stroke-width="1.8"/><path d="M9.5 10.5 L12.5 14" stroke="#a8a8a8" stroke-width="2.2"/></svg>
<svg class="ic" style="left:265px;top:727px" width="17" height="16" viewBox="0 0 17 16"><path d="M4.5 1.5 H13 L16.5 5 V15.5 H4.5 Z" fill="#e6e6e6" stroke="#c8c8c8"/><path d="M3.5 .5 H12 L15.5 4 V14.5 H3.5 Z" fill="#f4f4f4" stroke="#a9a9a9"/><circle cx="6" cy="7" r="5" fill="#e4e4e4" stroke="#a0a0a0" stroke-width="1.2"/><path d="M3.2 7 H8.8" stroke="#999" stroke-width="1.8"/><path d="M9.5 10.5 L12.5 14" stroke="#a8a8a8" stroke-width="2.2"/></svg>
<svg class="ic" style="left:288px;top:727px" width="17" height="16" viewBox="0 0 17 16"><path d="M4.5 1.5 H13 L16.5 5 V15.5 H4.5 Z" fill="#e6e6e6" stroke="#c8c8c8"/><path d="M3.5 .5 H12 L15.5 4 V14.5 H3.5 Z" fill="#f4f4f4" stroke="#a9a9a9"/><path d="M4 14 C2 11 2 9 3.5 8.5 L5 10 V4 C5 3 6.5 3 6.5 4 V3 C6.5 2 8 2 8 3 V3.5 C8 2.5 9.5 2.5 9.5 3.5 V5 C9.5 4 11 4 11 5 V11 C11 13 10 14.5 8 15.5 Z" fill="#f2f2f2" stroke="#b8b8b8" stroke-width=".9"/></svg>
<svg class="ic" style="left:310px;top:727px" width="17" height="16" viewBox="0 0 17 16"><path d="M4.5 1.5 H13 L16.5 5 V15.5 H4.5 Z" fill="#e6e6e6" stroke="#c8c8c8"/><path d="M3.5 .5 H12 L15.5 4 V14.5 H3.5 Z" fill="#f4f4f4" stroke="#a9a9a9"/><path d="M9.5 2 L7 5 H12 Z M9.5 14 L7 11 H12 Z M4.5 8 L6.5 5.5 V10.5 Z M14.5 8 L12.5 5.5 V10.5 Z" fill="#bdbdbd"/></svg>
<svg class="ic" style="left:332px;top:727px" width="17" height="16" viewBox="0 0 17 16"><path d="M4.5 1.5 H13 L16.5 5 V15.5 H4.5 Z" fill="#e6e6e6" stroke="#c8c8c8"/><path d="M3.5 .5 H12 L15.5 4 V14.5 H3.5 Z" fill="#f4f4f4" stroke="#a9a9a9"/><path d="M5 6 V12 M9 6 V12 M13 6 V12 M7 8 H7.5 M7 11 H7.5" stroke="#b8b8b8" stroke-width="1.4"/></svg>
<div class="sep" style="left:352px;top:728px;height:15px"></div>
<svg class="ic" style="left:360px;top:727px" width="17" height="16" viewBox="0 0 17 16"><path d="M4.5 1.5 H13 L16.5 5 V15.5 H4.5 Z" fill="#e6e6e6" stroke="#c8c8c8"/><path d="M3.5 .5 H12 L15.5 4 V14.5 H3.5 Z" fill="#f4f4f4" stroke="#a9a9a9"/><path d="M5 4 L8 7 M5 7 H8 V4 M14 4 L11 7 M11 4 V7 H14 M5 13 L8 10 M5 10 H8 V13 M14 13 L11 10 M11 13 V10 H14" stroke="#b0b0b0" stroke-width="1.1" fill="none"/></svg>
<svg class="ic" style="left:382px;top:727px" width="17" height="16" viewBox="0 0 17 16"><path d="M4.5 1.5 H13 L16.5 5 V15.5 H4.5 Z" fill="#e6e6e6" stroke="#c8c8c8"/><path d="M3.5 .5 H12 L15.5 4 V14.5 H3.5 Z" fill="#f4f4f4" stroke="#a9a9a9"/><path d="M5 4 L8 7 M5 7 V4 H8 M14 4 L11 7 M11 4 H14 V7 M5 13 L8 10 M5 10 V13 H8 M14 13 L11 10 M14 10 V13 H11" stroke="#b0b0b0" stroke-width="1.1" fill="none"/></svg>
<div class="sep" style="left:403px;top:728px;height:15px"></div>
<svg class="ic" style="left:409px;top:727px" width="17" height="16" viewBox="0 0 17 16"><path d="M4.5 1.5 H13 L16.5 5 V15.5 H4.5 Z" fill="#e6e6e6" stroke="#c8c8c8"/><path d="M3.5 .5 H12 L15.5 4 V14.5 H3.5 Z" fill="#f4f4f4" stroke="#a9a9a9"/><path d="M1 8 L6 4 V6.5 H12 V9.5 H6 V12 Z" fill="#c0c0c0"/></svg>
<svg class="ic" style="left:431px;top:727px" width="17" height="16" viewBox="0 0 17 16"><path d="M4.5 1.5 H13 L16.5 5 V15.5 H4.5 Z" fill="#e6e6e6" stroke="#c8c8c8"/><path d="M3.5 .5 H12 L15.5 4 V14.5 H3.5 Z" fill="#f4f4f4" stroke="#a9a9a9"/><path d="M16 8 L11 4 V6.5 H4 V9.5 H11 V12 Z" fill="#c0c0c0"/></svg>
<div class="a" style="left:450px;top:724px;width:60px;height:21px;background:#fff;border:1px solid #dadada"></div>
<div class="a" style="left:481px;top:727px;width:9px;height:14px;background:#eeeeee"></div>
<div class="a" style="left:453px;top:727px;width:28px;height:14px;background:#3390f0"></div>
<div class="tr" style="left:454px;top:728px;color:#1f5ec8;letter-spacing:-0.6px;font-size:11px">100%</div>
<svg class="ic" style="left:497px;top:732px" width="10" height="7" viewBox="0 0 10 7"><path d="M1 1 L5 5 L9 1" stroke="#b0b0b0" stroke-width="1.6" fill="none"/></svg>
<div class="sep" style="left:512px;top:728px;height:15px"></div>
<div class="a" style="left:516px;top:724px;width:22px;height:22px;background:#e2e8f0;border:1px solid #8aa0b8"></div>
<svg class="ic" style="left:518px;top:728px" width="17" height="16" viewBox="0 0 17 16"><path d="M4.5 1.5 H13 L16.5 5 V15.5 H4.5 Z" fill="#e6e6e6" stroke="#c8c8c8"/><path d="M3.5 .5 H12 L15.5 4 V14.5 H3.5 Z" fill="#f4f4f4" stroke="#a9a9a9"/><rect x="5.5" y="5.5" width="8" height="7" fill="none" stroke="#bbb"/><path d="M7.5 9 H11.5" stroke="#bbb"/></svg>
<svg class="ic" style="left:542px;top:727px" width="17" height="16" viewBox="0 0 17 16"><path d="M4.5 1.5 H13 L16.5 5 V15.5 H4.5 Z" fill="#e6e6e6" stroke="#c8c8c8"/><path d="M3.5 .5 H12 L15.5 4 V14.5 H3.5 Z" fill="#f4f4f4" stroke="#a9a9a9"/><rect x="5.5" y="4.5" width="8" height="8" fill="none" stroke="#c0c0c0" stroke-dasharray="1 1"/></svg>
<svg class="ic" style="left:563px;top:725px" width="17" height="18" viewBox="0 0 17 18"><path d="M3 6 C5 1 12 1 14 5" stroke="#1a5aa0" stroke-width="2.4" fill="none"/><path d="M12 3 L16 6 L11.5 7.5 Z" fill="#1a5aa0"/><rect x="1.5" y="8.5" width="6" height="9" fill="#fff" stroke="#1a2a4a"/><rect x="9.5" y="8.5" width="6" height="9" fill="#fff" stroke="#1a2a4a"/><rect x="2.5" y="13" width="4" height="3" fill="#1a5aa0"/><rect x="10.5" y="10" width="4" height="3" fill="#1a5aa0"/></svg>
<svg class="ic" style="left:584px;top:726px" width="17" height="17" viewBox="0 0 17 17"><rect x="6.5" y=".5" width="10" height="9" fill="#fff" stroke="#333"/><rect x="3.5" y="3.5" width="10" height="9" fill="#fff" stroke="#333"/><rect x="5.5" y="5.5" width="8" height="6" fill="#8ac880" stroke="#333"/><path d="M0 14 H15 V16 H0 Z" fill="#1a3a7a"/><path d="M1.5 15 H3 M5 15 H6.5 M8.5 15 H10 M12 15 H13.5" stroke="#fff" stroke-width=".8"/></svg>
<div class="a" style="left:605px;top:726px;width:11px;height:21px;background:linear-gradient(#f0f0f0,#b9b9b9);"></div><svg class="ic" style="left:607px;top:737px" width="7" height="8" viewBox="0 0 7 8"><path d="M0.5 1.5 H6.5" stroke="#000" stroke-width="1.2"/><path d="M0 4 H7 L3.5 7.5 Z" fill="#000"/></svg>
<div class="t" style="left:3px;top:752px;font-size:12px">Add new data to the map's active data frame</div>
<div class="a" style="left:0;top:765px;width:1365px;height:2px;background:#7b93ab"></div>

<!-- search tab -->
<div class="a" style="left:1346px;top:103px;width:22px;height:67px;background:#f4f4f4;border:1px solid #a8a8a8;border-radius:4px"></div>
<svg class="ic" style="left:1348px;top:107px" width="17" height="16" viewBox="0 0 17 16"><rect x=".5" y=".5" width="15" height="12" fill="#fff" stroke="#2a3a5a"/><rect x="1" y="1" width="14" height="2" fill="#2f5fb0"/><rect x="3" y="4.5" width="10" height="2" fill="#ddd" stroke="#888" stroke-width=".5"/><circle cx="10" cy="11.5" r="4" fill="#3a9a5a"/><circle cx="9" cy="10.5" r="2" fill="#7ad0f0"/></svg>
<div class="t" style="left:1349px;top:127px;width:14px;height:40px;"><div style="position:absolute;left:0;top:0;transform-origin:0 0;transform:translate(14px,0) rotate(90deg);font-size:11.5px;line-height:14px;color:#6a6a6a;letter-spacing:0px">Search</div></div>

<!-- popup -->
<div class="a" style="left:1091px;top:718px;width:274px;height:49px;background:linear-gradient(#d2e0f7,#c0d1f1);border-top:1px solid #7f9fd8;border-left:1px solid #3a62a8"></div>
<div class="a" style="left:1091px;top:719px;width:274px;height:7px;background:linear-gradient(#6b93d8,#4a76c6)"></div>
<div class="a" style="left:1212px;top:721px;width:30px;height:2px;background-image:linear-gradient(90deg,#fff 50%,transparent 50%);background-size:3px 2px"></div>
<svg class="ic" style="left:1095px;top:729px" width="36" height="34" viewBox="0 0 36 34">
<path d="M12 9 L31 30" stroke="#5a5448" stroke-width="5" stroke-linecap="round"/>
<path d="M12 9 L31 30" stroke="#e4dcc4" stroke-width="3" stroke-linecap="round"/>
<path d="M13 8.5 L31 29" stroke="#f8f4e8" stroke-width="1" stroke-linecap="round"/>
<path d="M3 9 C6 6 10 4 14 3 C17 2.5 20 2.5 23 3.5 C19 4 16 6 15 8 L13 11 L8 12 L5 13 Z" fill="#6e6e6e" stroke="#3a3a3a" stroke-width=".7"/>
<circle cx="4.5" cy="11" r="3" fill="#7a7a7a" stroke="#333" stroke-width=".7"/>
<path d="M8 6.5 C11 4.5 15 3.5 19 3.5" stroke="#c8c8c8" stroke-width="1" fill="none"/>
</svg>
<svg class="ic" style="left:1137px;top:735px" width="14" height="12" viewBox="0 0 14 12"><path d="M1 6.5 L5 10.5 L13 1.5" stroke="#3bb03b" stroke-width="2.4" fill="none"/></svg>
<div class="tr" style="left:1156px;top:733px;font-weight:bold;color:#2a3040;font-size:12.5px;line-height:13px;height:13px;letter-spacing:-0.45px">Extract by Mask</div>
<svg class="ic" style="left:1347px;top:730px" width="11" height="11" viewBox="0 0 11 11"><path d="M1 1 L10 10 M10 1 L1 10" stroke="#1a1a1a" stroke-width="2.2"/></svg>
<div class="tr" style="left:1113px;top:752px;color:#8a9ab8;font-size:11.4px">272498.7&nbsp; 4160182.755 Unknown Units</div>
</body></html>
